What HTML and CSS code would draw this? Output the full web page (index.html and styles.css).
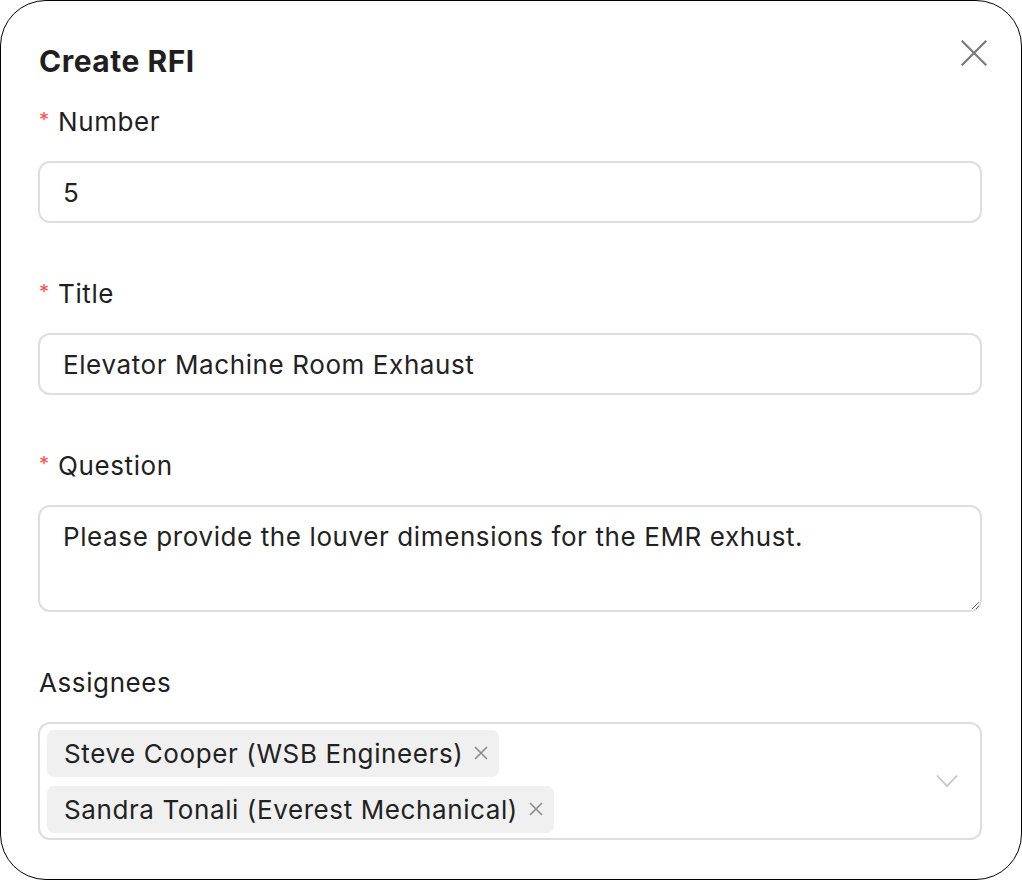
FILE: index.html
```html
<!DOCTYPE html>
<html lang="en">
<head>
<meta charset="utf-8">
<title>Create RFI</title>
<link rel="stylesheet" href="styles.css">
</head>
<body>
<div class="modal">
  <div class="modal-header">
    <h1 class="modal-title">Create RFI</h1>
    <button class="close-btn" aria-label="Close">
      <svg width="26" height="26" viewBox="0 0 26 26"><path d="M1.5 1.5 L24.5 24.5 M24.5 1.5 L1.5 24.5" stroke="#7a7a7a" stroke-width="2.2" stroke-linecap="square" fill="none"/></svg>
    </button>
  </div>
  <form class="form">
    <div class="field">
      <label class="label"><span class="req">*</span>Number</label>
      <input class="input" type="text" value="5">
    </div>
    <div class="field">
      <label class="label"><span class="req">*</span>Title</label>
      <input class="input" type="text" value="Elevator Machine Room Exhaust">
    </div>
    <div class="field">
      <label class="label"><span class="req">*</span>Question</label>
      <textarea class="input textarea">Please provide the louver dimensions for the EMR exhust.</textarea>
    </div>
    <div class="field">
      <label class="label">Assignees</label>
      <div class="select">
        <div class="tags">
          <span class="tag">Steve Cooper (WSB Engineers)<span class="tag-x"><svg width="14" height="14" viewBox="0 0 14 14"><path d="M1 1 L13 13 M13 1 L1 13" stroke="#8c8c8c" stroke-width="1.6" fill="none"/></svg></span></span>
          <span class="tag">Sandra Tonali (Everest Mechanical)<span class="tag-x"><svg width="14" height="14" viewBox="0 0 14 14"><path d="M1 1 L13 13 M13 1 L1 13" stroke="#8c8c8c" stroke-width="1.6" fill="none"/></svg></span></span>
        </div>
        <span class="chevron"><svg width="22" height="14" viewBox="0 0 22 14"><path d="M1 1.5 L11 12 L21 1.5" stroke="#c4c4c4" stroke-width="1.8" fill="none"/></svg></span>
      </div>
    </div>
  </form>
</div>
</body>
</html>
```
FILE: styles.css
```css
* { box-sizing: border-box; }
html, body { margin: 0; padding: 0; background: #fff; }
body {
  font-family: Inter, "Noto Sans", "Liberation Sans", sans-serif;
  color: #1f1f1f;
  letter-spacing: 0.6px;
}
.modal {
  position: relative;
  width: 1022px;
  height: 880px;
  border: 1px solid #000;
  border-radius: 46px;
  padding: 40px 40px 0 37px;
  background: #fff;
  overflow: hidden;
}
.modal-header {
  display: flex;
  align-items: center;
  margin-bottom: 21px;
}
.modal-title {
  margin: 0 0 0 1px;
  font-size: 30px;
  line-height: 40px;
  font-weight: 700;
  letter-spacing: 0.5px;
  color: #1f1f1f;
}
.close-btn {
  position: absolute;
  top: 39px;
  right: 34px;
  border: 0;
  background: none;
  padding: 0;
  width: 26px;
  height: 26px;
  cursor: pointer;
  display: flex;
}
.form { display: flex; flex-direction: column; gap: 51px; }
.field { display: flex; flex-direction: column; }
.label {
  display: flex;
  align-items: center;
  font-size: 26px;
  line-height: 40px;
  margin: 0 0 19px 1px;
  color: #1f1f1f;
}
.req {
  color: #ff4d4f;
  font-size: 20px;
  width: 19px;
  align-self: flex-start;
  line-height: 36px;
}
.input {
  display: block;
  width: 944px;
  height: 62px;
  border: 2px solid #dedede;
  border-radius: 12px;
  padding: 0 23px;
  font-family: inherit;
  font-size: 26px;
  letter-spacing: 0.6px;
  color: #222;
  background: #fff;
  outline: none;
}
.textarea {
  height: 107px;
  padding: 11px 23px;
  line-height: 38px;
  resize: vertical;
}
.select {
  width: 944px;
  height: 118px;
  border: 2px solid #dedede;
  border-radius: 12px;
  padding: 6px 22px 6px 7px;
  display: flex;
  align-items: center;
  justify-content: space-between;
}
.tags {
  display: flex;
  flex-direction: column;
  align-items: flex-start;
  gap: 9px;
}
.tag {
  display: inline-flex;
  align-items: center;
  height: 47px;
  background: #f0f0f0;
  border-radius: 7px;
  padding: 0 11px 0 17px;
  font-size: 26px;
  color: #222;
}
.tag-x { display: flex; margin-left: 11px; }
.chevron { display: flex; }
```
